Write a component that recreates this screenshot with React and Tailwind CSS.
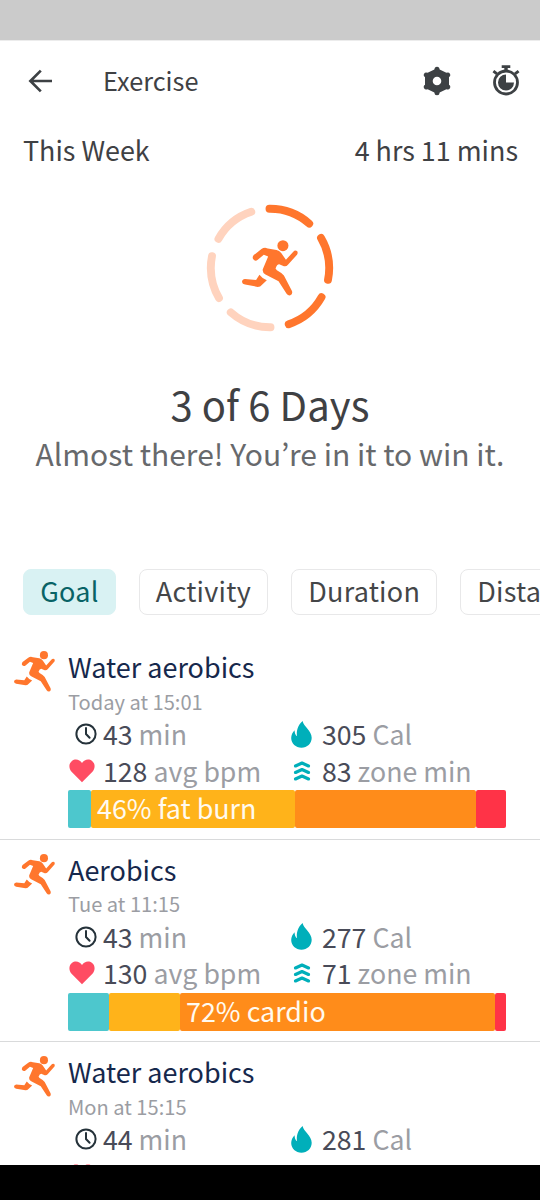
import React, { useState } from "react";

const RunnerIcon = ({ className }) => (
  <svg viewBox="157 150 167 167" className={className} fill="#ff762d">
    <circle cx="279" cy="167" r="16.5" />
    <path d="M234 175L260 180Q268 182 274 189L288 209L310 185Q315 179 321 183Q325 188 321 194L294 224Q289 230 282 228L268 222Q261 222 257 235L261 240Q276 248 282 256L306 302Q309 312 301 315Q294 316 290 310L266 273L227 253Q217 247 219 237L235 199L222 194L204 209Q196 215 190 207Q187 201 192 195L215 177Q220 173 226 173Z" />
    <path d="M209 254L199 269L166 266Q157 267 157 275Q158 282 166 283L204 290Q212 290 216 284L231 270Q218 266 209 254Z" />
  </svg>
);

const BackIcon = () => (
  <svg viewBox="0 0 24 24" className="size-6" fill="none" stroke="#3d4144" strokeWidth="2.7">
    <path d="M12.8 1.6L2.4 12l10.4 10.4M2.4 12H24" />
  </svg>
);

const GearIcon = () => (
  <svg viewBox="-14 -15 28 30" className="w-7 h-[30px]" fill="#3d4144">
    <path
      fillRule="evenodd"
      d="M0-12.8L12-7V7L0 12.8L-12 7V-7ZM0-4.3A4.3 4.3 0 1 0 0 4.3A4.3 4.3 0 1 0 0-4.3Z"
    />
    <path
      d="M0-11.8V-9M0 11.8V9M10.7-6L8-4.6M10.7 6L8 4.6M-10.7-6L-8-4.6M-10.7 6L-8 4.6"
      stroke="#3d4144"
      strokeWidth="5"
      strokeLinecap="round"
    />
  </svg>
);

const StopwatchIcon = () => (
  <svg viewBox="-14 -17.5 28 31" className="w-7 h-[31px]" fill="none" stroke="#3d4144">
    <circle r="11.5" strokeWidth="2.8" />
    <path d="M-4.3-15.9H4.3M-12.6-11.4L-9-8.6M12.6-11.4L9-8.6" strokeWidth="2.9" />
    <path d="M0-16V-11" strokeWidth="3.4" />
    <path d="M0-8V0H8A8 8 0 1 1 0-8Z" fill="#3d4144" stroke="none" />
  </svg>
);

const ClockIcon = () => (
  <svg viewBox="0 0 22 22" className="size-[22px]" fill="none" stroke="#25323a" strokeWidth="2">
    <circle cx="11" cy="11" r="9.6" />
    <path d="M11 5V11L14.6 14.8" strokeLinecap="round" />
  </svg>
);

const HeartIcon = () => (
  <svg viewBox="0 0 26 24" className="w-[26px] h-6" fill="#ff4c63">
    <path d="M13 23.3L2.8 13.1C-.6 9.5-.2 4.3 2.9 1.9C6.2-.6 10.7 .4 13 3.9C15.3 .4 19.8-.6 23.1 1.9C26.2 4.3 26.6 9.5 23.2 13.1Z" />
  </svg>
);

const FlameIcon = () => (
  <svg viewBox="0 0 21 27" className="w-[21px] h-[27px]" fill="#00afba">
    <path d="M11.6 0C12.5 5.5 20.7 9.6 20.7 16.8C20.7 22.6 16.1 26.8 10.5 26.8C4.8 26.8.2 22.6.2 17.1C.2 14.3 1.5 11.2 3.6 9.3C3.6 11.7 4.3 14.3 6.1 15.3C5.2 10.8 6.5 4.2 11.6 0Z" />
  </svg>
);

const ZoneIcon = () => (
  <svg
    viewBox="0 0 18 20"
    className="w-[18px] h-5"
    fill="none"
    stroke="#00afba"
    strokeWidth="3.1"
    strokeLinecap="round"
    strokeLinejoin="round"
  >
    <path d="M2.5 5L9 2L15.5 5M2.5 11.5L9 8.5L15.5 11.5M2.5 18L9 15L15.5 18" />
  </svg>
);

const GoalRing = () => (
  <div className="grid place-items-center size-32">
    <svg
      viewBox="-64 -64 128 128"
      className="col-start-1 row-start-1 size-32"
      fill="none"
      strokeWidth="7.9"
      strokeLinecap="round"
    >
      <circle
        r="59.2"
        pathLength="360"
        stroke="#ff762d"
        strokeDasharray="42 18 42 18 42 198"
        transform="rotate(-90.5)"
      />
      <circle
        r="59.2"
        pathLength="360"
        stroke="#ffd3be"
        strokeDasharray="42 18 42 18 42 198"
        transform="rotate(89.5)"
      />
    </svg>
    <RunnerIcon className="col-start-1 row-start-1 size-14" />
  </div>
);

const tabs = ["Goal", "Activity", "Duration", "Distance"];

const workouts = [
  {
    name: "Water aerobics",
    time: "Today at 15:01",
    min: 43,
    cal: 305,
    bpm: 128,
    zone: 83,
    zones: [
      { width: 23, color: "bg-[#4dc7cd]" },
      { width: 204, color: "bg-[#ffb31a]", label: "46% fat burn" },
      { width: 181, color: "bg-[#ff8c1a]" },
      { width: 30, color: "bg-[#ff3347]" },
    ],
  },
  {
    name: "Aerobics",
    time: "Tue at 11:15",
    min: 43,
    cal: 277,
    bpm: 130,
    zone: 71,
    zones: [
      { width: 41, color: "bg-[#4dc7cd]" },
      { width: 71, color: "bg-[#ffb31a]" },
      { width: 315, color: "bg-[#ff8c1a]", label: "72% cardio" },
      { width: 11, color: "bg-[#ff3347]" },
    ],
  },
  {
    name: "Water aerobics",
    time: "Mon at 15:15",
    min: 44,
    cal: 281,
    zones: [],
  },
];

const Stat = ({ icon, value, unit, wide }) => (
  <div className="flex items-center h-[36.5px]">
    <div className={`${wide ? "w-[35px]" : "w-[31px]"} shrink-0 flex`}>{icon}</div>
    {value && (
      <div className="text-[26.7px] text-[#9b9da3] whitespace-nowrap">
        <span className="text-[#494b58]">{value}</span> {unit}
      </div>
    )}
  </div>
);

const Workout = ({ item }) => (
  <div className="flex h-[202.6px] shrink-0 pt-3 pl-3.5 border-b border-[#d9dadb]">
    <RunnerIcon className="size-[41px] mt-0.5 shrink-0" />
    <div className="ml-[13px] w-[438px] text-[27px] leading-[36.5px]">
      <div className="text-[#16284c]">{item.name}</div>
      <div className="h-[30.5px] text-[20.1px] leading-[32px] text-[#9b9da3]">{item.time}</div>
      <div className="grid grid-cols-[223px_1fr]">
        <Stat wide icon={<div className="pl-[6.5px]"><ClockIcon /></div>} value={item.min} unit="min" />
        <Stat icon={<FlameIcon />} value={item.cal} unit="Cal" />
        <Stat wide icon={<div className="pl-px"><HeartIcon /></div>} value={item.bpm} unit="avg bpm" />
        {item.zone && (
          <Stat icon={<div className="pl-0.5"><ZoneIcon /></div>} value={item.zone} unit="zone min" />
        )}
      </div>
      <div className="flex h-[38px] mt-px">
        {item.zones.map((zone, index) => (
          <div
            key={index}
            className={`${zone.color} rounded-xs pl-1.5 whitespace-nowrap text-[26.9px] text-[#fffaf0] leading-[36px]`}
            style={{ width: zone.width }}
          >
            {zone.label}
          </div>
        ))}
      </div>
    </div>
  </div>
);

const App = () => {
  const [activeTab, setActiveTab] = useState("Goal");

  return (
    <div className="w-[540px] h-[1200px] flex flex-col overflow-hidden bg-white text-[#3f4144] font-['Noto_Sans_CJK_KR',sans-serif]">
      <div className="h-10 shrink-0 bg-[#cbcbcb]" />
      <div className="h-px shrink-0 bg-[#ececec]" />

      <div className="h-[79px] shrink-0 flex items-center pl-7 pr-5">
        <button className="pt-px">
          <BackIcon />
        </button>
        <div className="ml-[51px] text-[25.3px] leading-9 pb-0.5">Exercise</div>
        <button className="ml-auto">
          <GearIcon />
        </button>
        <button className="ml-[41px]">
          <StopwatchIcon />
        </button>
      </div>

      <div className="shrink-0 h-[84px] pt-3 pl-[23px] pr-[22px] flex justify-between text-[26.9px] leading-[35px]">
        <div>This Week</div>
        <div>4 hrs 11 mins</div>
      </div>

      <div className="shrink-0 flex flex-col items-center">
        <GoalRing />
        <div className="mt-[45px] text-[40px] leading-[54px] tracking-[0.1px]">3 of 6 Days</div>
        <div className="text-[30px] leading-[44px] text-[#67696c] whitespace-nowrap">
          Almost there! You’re in it to win it.
        </div>
      </div>

      <div className="shrink-0 mt-[94px] h-[46px] pl-[23px] flex gap-[22.8px]">
        {tabs.map((tab) => (
          <button
            key={tab}
            onClick={() => setActiveTab(tab)}
            className={`shrink-0 rounded-lg border px-[16.2px] text-[27px] leading-[40px] pb-0.5 tracking-[0.25px] ${
              activeTab === tab
                ? "bg-[#d9f2f3] border-[#d9f2f3] text-[#086366]"
                : "border-[#e8e8e9] text-[#444648]"
            }`}
          >
            {tab}
          </button>
        ))}
      </div>

      <div className="flex-1 min-h-0 mt-[22px] flex flex-col overflow-hidden">
        {workouts.map((item, index) => (
          <Workout key={index} item={item} />
        ))}
      </div>

      <div className="h-[35px] shrink-0 bg-black" />
    </div>
  );
};

export default App;
